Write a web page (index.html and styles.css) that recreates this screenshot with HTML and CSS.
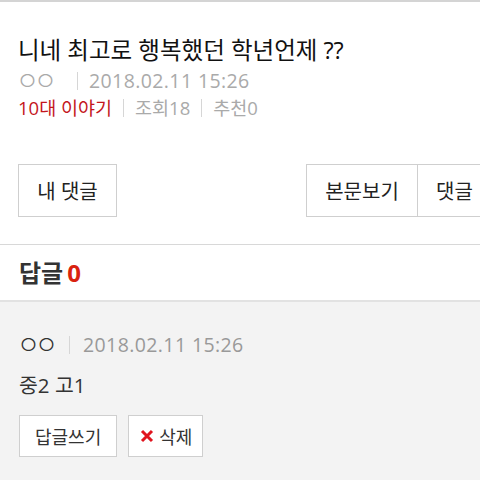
FILE: index.html
```html
<!DOCTYPE html>
<html lang="ko">
<head>
  <meta charset="UTF-8">
  <meta name="viewport" content="width=device-width, initial-scale=1.0">
  <title>니네 최고로 행복했던 학년언제 ??</title>
  <link rel="stylesheet" href="styles.css">
</head>
<body>
  <div class="post">
    <h2 class="post-title">니네 최고로 행복했던 학년언제 ??</h2>
    <div class="post-meta first">
      <span class="writer">ㅇㅇ</span>
      <span class="bar"></span>
      <span class="date">2018.02.11 15:26</span>
    </div>
    <div class="post-meta">
      <span class="board">10대 이야기</span>
      <span class="bar"></span>
      <span>조회18</span>
      <span class="bar"></span>
      <span>추천0</span>
    </div>

    <div class="post-tools">
      <button class="tool-button">내 댓글</button>
      <div class="tool-group">
        <button class="tool-button">본문보기</button>
        <button class="tool-button">댓글</button>
      </div>
    </div>
  </div>

  <div class="reply-head">
    답글<span class="reply-count">0</span>
  </div>

  <div class="reply-list">
    <div class="reply">
      <div class="reply-meta">
        <span class="writer">ㅇㅇ</span>
        <span class="bar"></span>
        <span class="date">2018.02.11 15:26</span>
      </div>
      <p class="reply-text">중2 고1</p>
      <div class="reply-actions">
        <button class="small-button">답글쓰기</button>
        <button class="small-button delete-button">
          <svg class="x-icon" width="14" height="14" viewBox="0 0 14 14">
            <path d="M2 2 L12 12 M12 2 L2 12" stroke="#e0141e" stroke-width="3"/>
          </svg>삭제
        </button>
      </div>
    </div>
  </div>
</body>
</html>
```

FILE: styles.css
```css
body {
  margin: 0;
  font-family: "Open Sans", "Noto Sans CJK KR", sans-serif;
  background-color: #f3f3f3;
  color: #222;
  border-top: 2px solid #d4d4d4;
  overflow: hidden;
}
.post {
  background-color: white;
  padding: 33px 0 27px 18px;
  border-bottom: 1px solid #d8d8d8;
}
.post-title {
  margin: 0;
  font-size: 23.5px;
  font-weight: 400;
  line-height: 30px;
  color: #111;
}
.post-meta {
  display: flex;
  align-items: center;
  font-size: 18.5px;
  line-height: 27px;
  color: #aaa;
}
.post-meta.first {
  margin-top: 2px;
}
.writer {
  font-size: 25px;
  font-weight: 300;
  letter-spacing: -5px;
  margin-left: -2px;
}
.post-meta .writer {
  margin-right: 14px;
}
.date {
  font-size: 19.5px;
  letter-spacing: 0.4px;
}
.bar {
  display: inline-block;
  width: 1px;
  height: 18px;
  background-color: #d6d6d6;
  margin: 0 11px;
}
.post-meta .bar:first-of-type {
  margin-right: 10px;
}
.board {
  color: #c4161c;
}
.post-tools {
  display: flex;
  justify-content: space-between;
  margin-top: 43px;
}
.tool-group {
  display: flex;
  margin-right: -30px;
}
.tool-button {
  font-family: inherit;
  font-size: 20px;
  color: #222;
  background-color: white;
  border: 1px solid #cfcfcf;
  height: 53px;
  padding: 0 18px;
  width: 99px;
}
.tool-group .tool-button {
  width: 112px;
}
.tool-group .tool-button + .tool-button {
  border-left: none;
  width: 92px;
  text-align: left;
}
.reply-head {
  background-color: white;
  padding: 13px 19px 0;
  height: 42px;
  font-size: 24px;
  font-weight: 700;
  line-height: 30px;
  color: #333;
  border-bottom: 2px solid #e2e2e2;
}
.reply-count {
  color: #d9230f;
  margin-left: 4px;
}
.reply {
  padding: 29px 18px 0 19px;
}
.reply-meta {
  display: flex;
  align-items: center;
  font-size: 18.5px;
  line-height: 27px;
  color: #333;
}
.reply-meta .writer {
  margin-right: 12px;
}
.reply-meta .bar {
  margin: 0 13px 0 4px;
}
.reply-meta .date {
  color: #999;
}
.reply-text {
  margin: 13px 0 0;
  font-size: 20.5px;
  line-height: 28px;
  color: #333;
}
.reply-actions {
  display: flex;
  gap: 11px;
  margin-top: 16px;
}
.small-button {
  display: flex;
  align-items: center;
  font-family: inherit;
  font-size: 18px;
  color: #333;
  background-color: white;
  border: 1px solid #cfcfcf;
  height: 42px;
  padding: 0 15px;
}
.delete-button {
  padding: 0 10px 0 11px;
}
.x-icon {
  margin-right: 5px;
}
```
